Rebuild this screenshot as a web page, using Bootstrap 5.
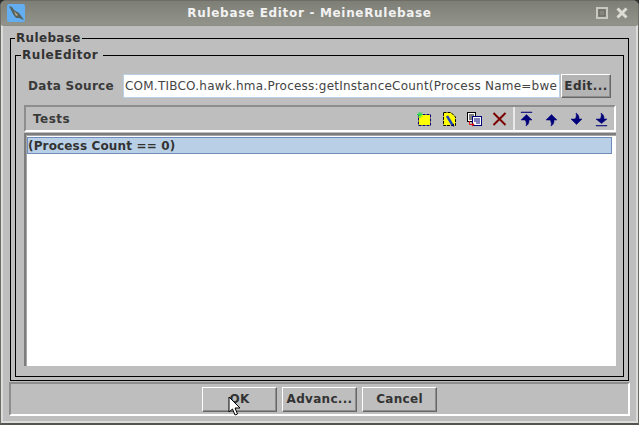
<!DOCTYPE html>
<html lang="en">
<head>
  <meta charset="UTF-8" />
  <meta name="viewport" content="width=device-width, initial-scale=1.0" />
  <title>Rulebase Editor - MeineRulebase</title>
  <link href="https://cdn.jsdelivr.net/npm/bootstrap@5.3.0/dist/css/bootstrap.min.css" rel="stylesheet">
  <style>
    html, body { height: 425px; overflow: hidden; background: #2c2c2c; }
    body { font-family: "DejaVu Sans", sans-serif; font-size: 12px; color: #333; }
    .app-window { position: relative; width: 639px; height: 425px; background: #bebebe; border: 1px solid #6d6d66; border-bottom: 2px solid #55554f; border-radius: 6px 6px 0 0; overflow: hidden; }
    .title-bar { height: 24px; flex: none; color: #f2f2f2; font-weight: 700; font-size: 12px; letter-spacing: .68px; background: linear-gradient(#7d7e76, #92938a); padding: 0 8px 0 6px; }
    .title-text { flex: 1; text-align: center; }
    .app-icon { width: 18px; height: 18px; display: block; }
    .win-btn { width: 16px; height: 16px; display: block; }
    .content-area { border: 2px solid #dcdcdc; border-top: 1px solid #8d8d86; padding: 12px 6px 0 6px; }
    .group-box { border: 1px solid #000; margin: 0; padding: 0; min-width: 0; border-radius: 0; }
    .group-box > legend { float: none; width: auto; margin: 0; padding: 0 1px; font-size: 12px; font-weight: 700; line-height: 14px; letter-spacing: .35px; color: #333; }
    .outer-box { margin: -7px 1px 0 1px; padding: 3px 4px 4px 4px; height: 350px; flex: none; }
    .inner-box { padding: 12px 7px 7px 8px; height: 329px; }
    .inner-box > legend { margin-left: -3px; padding-right: 5px; letter-spacing: .55px; }
    .ds-row { height: 24px; margin: 0 5px 0 4px; }
    .ds-label { width: 95px; font-weight: 700; font-size: 12px; letter-spacing: .3px; color: #3a3a3a; flex: none; }
    .ds-input { flex: 1; min-width: 0; height: 24px; background: #fff; border: 1px solid #b8cfe5; padding: 0 1px; line-height: 22px; white-space: nowrap; overflow: hidden; font-size: 12px; letter-spacing: .23px; color: #444; }
    .swing-btn { background: #bebebe; color: #333; font-weight: 700; font-size: 12px; letter-spacing: .3px; border: 1px solid; border-color: #fff #666 #666 #fff; box-shadow: inset -1px -1px 0 #8d8d8d; padding: 0; border-radius: 0; }
    .swing-btn:hover { background: #bebebe; color: #333; border-color: #fff #666 #666 #fff; }
    .edit-btn { width: 50px; height: 24px; flex: none; margin-left: 1px; background: #b4b4b4; letter-spacing: .45px; }
    .tests-bar { height: 27px; margin-top: 7px; border: 2px solid; border-color: #8d8d8d #fff #fff #8d8d8d; padding: 0 5px 0 7px; flex: none; }
    .tests-label { font-weight: 700; letter-spacing: .5px; color: #3a3a3a; }
    .tool-group { column-gap: 9px; }
    .bar-sep { width: 2px; height: 100%; background: #e9e9e9; margin: 0 3px 0 6px; }
    .tool-icon { display: block; width: 16px; height: 16px; }
    .arrow-icon { fill: #00007b; stroke: #00007b; stroke-width: .5; }
    .test-list { height: 233px; background: #fff; border-style: solid; border-width: 2px 0 0 2px; border-color: #7d7d7d; box-shadow: inset 1px 1px 0 #a5a5a5; margin-top: 1px; padding: 2px 4px 2px 1px; flex: none; }
    .test-row { height: 17px; line-height: 16px; background: #b8cfe5; border: 1px solid #6f8bbd; font-weight: 700; letter-spacing: .15px; color: #333; white-space: nowrap; }
    .button-panel { height: 34px; margin: 1px 0 0 0; border: 2px solid; border-color: #8d8d8d #fff #fff #8d8d8d; column-gap: 5px; flex: none; }
    .panel-btn { width: 75px; height: 25px; }
    .mouse-cursor { position: absolute; left: 227px; top: 395px; width: 14px; height: 21px; }
  </style>
</head>
<body>
  <div class="app-window d-flex flex-column">
    <div class="title-bar d-flex align-items-center">
      <svg class="app-icon" viewBox="0 0 18 18">
        <rect width="18" height="18" rx="2" fill="#62aef0"/>
        <path d="M2 2 L5 3 L7 6 L12 9 L17 16 L12 14 L9 14 L6 10 L4 6 Z" fill="#55625c"/>
        <path d="M7 7 L11 11 L9 12 Z" fill="#c0a78c"/>
      </svg>
      <div class="title-text">Rulebase Editor - MeineRulebase</div>
      <svg class="win-btn me-1" viewBox="0 0 16 16">
        <rect x="3" y="3" width="10" height="10" fill="none" stroke="#c8c8c0" stroke-width="2"/>
        <rect x="5" y="5" width="6" height="6" fill="#83847c" stroke="#66665f"/>
      </svg>
      <svg class="win-btn" viewBox="0 0 16 16">
        <path d="M3.5 3.5 L12.5 12.5 M12.5 3.5 L3.5 12.5" stroke="#dcdcd4" stroke-width="3"/>
      </svg>
    </div>

    <div class="content-area flex-grow-1 d-flex flex-column">
      <fieldset class="group-box outer-box">
        <legend>Rulebase</legend>
        <fieldset class="group-box inner-box d-flex flex-column">
          <legend>RuleEditor</legend>

          <div class="ds-row d-flex align-items-center">
            <div class="ds-label">Data Source</div>
            <div class="ds-input">COM.TIBCO.hawk.hma.Process:getInstanceCount(Process Name=bwe</div>
            <button class="btn swing-btn edit-btn" type="button">Edit...</button>
          </div>

          <div class="tests-bar d-flex align-items-center">
            <div class="tests-label me-auto">Tests</div>
            <div class="d-flex align-items-center tool-group">
              <!-- new -->
              <svg class="tool-icon" viewBox="0 0 16 16">
                <rect x="2.5" y="3.5" width="12" height="11" fill="#ffff00" stroke="#00007b" stroke-dasharray="3 1"/>
                <path d="M1 3.5 H7 M4 1 V7 M2 1.5 L6 5.5 M6 1.5 L2 5.5" stroke="#22dd44"/>
              </svg>
              <!-- edit -->
              <svg class="tool-icon" viewBox="0 0 16 16">
                <path d="M2.5 1.5 H10 L14.5 6 V14.5 H2.5 Z" fill="#ffff00" stroke="#000" stroke-dasharray="3 1"/>
                <path d="M6 5 L11.5 14" stroke="#2040c0" stroke-width="2.4"/>
                <path d="M11 14 L13 16 L13 12.5 Z" fill="#000060"/>
              </svg>
              <!-- copy -->
              <svg class="tool-icon" viewBox="0 0 16 16">
                <rect x="1.5" y="1.5" width="8" height="9" fill="#fff" stroke="#000"/>
                <path d="M3 4 H8 M3 6 H8 M3 8 H8" stroke="#000"/>
                <rect x="6.5" y="5.5" width="9" height="9" fill="#fff" stroke="#00007b"/>
                <path d="M8 8 H14 M8 10 H14 M10 12 H14" stroke="#00007b"/>
                <path d="M3.5 10 V13.5 H8 M6 11.5 L8 13.5 L6 15" stroke="#e01010" fill="none"/>
              </svg>
              <!-- delete -->
              <svg class="tool-icon" viewBox="0 0 16 16">
                <path d="M2.5 2 L14.5 14 M14.5 2 L2.5 14" stroke="#7b0000" stroke-width="2"/>
              </svg>
            </div>
            <div class="bar-sep"></div>
            <div class="d-flex align-items-center tool-group">
              <svg class="tool-icon arrow-icon" viewBox="0 0 16 16">
                <path d="M3 1 H14 V1.5 H3 Z M8.5 3.5 L14 9 H11 V10 C11 12 10 14 8 15 C8.5 13 8.5 11 7 9 H3 Z"/>
              </svg>
              <svg class="tool-icon arrow-icon" viewBox="0 0 16 16">
                <path d="M8.5 3.5 L14 9 H11 V10 C11 12 10 14 8 15 C8.5 13 8.5 11 7 9 H3 Z"/>
              </svg>
              <svg class="tool-icon arrow-icon" viewBox="0 0 16 16">
                <path d="M8.5 13.5 L14 8 H11 V7 C11 5 10 3 8 2 C8.5 4 8.5 6 7 8 H3 Z"/>
              </svg>
              <svg class="tool-icon arrow-icon" viewBox="0 0 16 16">
                <path d="M8.5 12.5 L14 8 H11 V7 C11 5 10 3 8 2 C8.5 4 8.5 6 7 8 H3 Z M3 14.5 H14 V15 H3 Z"/>
              </svg>
            </div>
          </div>

          <div class="test-list">
            <div class="test-row">(Process Count == 0)</div>
          </div>
        </fieldset>
      </fieldset>

      <div class="button-panel d-flex justify-content-center align-items-center">
        <button class="btn swing-btn panel-btn" type="button">OK</button>
        <button class="btn swing-btn panel-btn" type="button">Advanc...</button>
        <button class="btn swing-btn panel-btn" type="button">Cancel</button>
      </div>
    </div>

    <svg class="mouse-cursor" viewBox="0 0 14 21">
      <path d="M1 1 V16 L4.5 13 L7 19 L9.5 18 L7 12 H12 Z" fill="#fff" stroke="#000"/>
    </svg>
  </div>
</body>
</html>
